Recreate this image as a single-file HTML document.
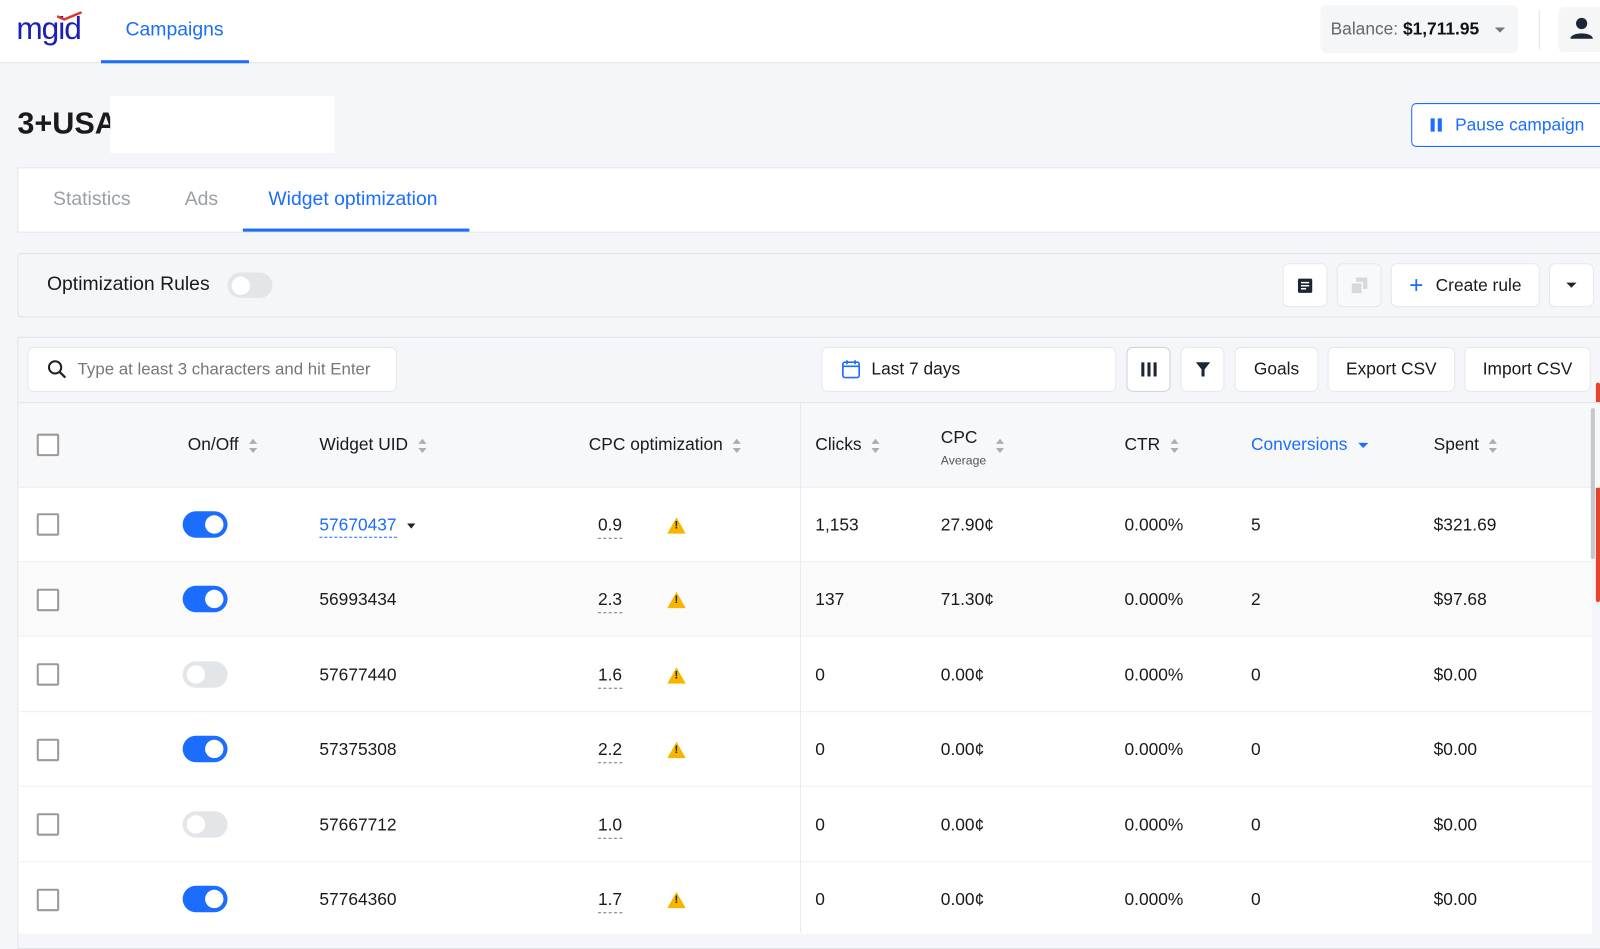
<!DOCTYPE html>
<html><head><meta charset="utf-8"><style>
*{box-sizing:border-box;margin:0;padding:0}
body{width:1600px;height:909px;overflow:hidden;background:#f5f6f9;font-family:"Liberation Sans",sans-serif;color:#1a1a1a;position:relative}
#w{position:absolute;left:0;top:0;width:1568px;height:891px;transform:scale(1.0204);transform-origin:0 0}
.a{position:absolute}
.t{font-size:17px;white-space:nowrap}
.btn{position:absolute;background:#fff;border-radius:5px;box-shadow:0 0 0 1px #e6e8ec;display:flex;align-items:center;justify-content:center;font-size:17px}
.cb{position:absolute;left:36px;width:22px;height:22px;border:2px solid #9a9a9a;border-radius:2px;background:#fff}
.tg{position:absolute;left:179px;width:44px;height:26px;border-radius:13px}
.tg.on{background:#1a6dff}.tg.off{background:#e3e6e9}
.tg::after{content:"";position:absolute;top:4px;width:18px;height:18px;border-radius:50%;background:#fff}
.tg.on::after{right:4px}.tg.off::after{left:4px}
.sort{display:inline-block;vertical-align:middle;margin-left:10px;width:8px;height:14px;position:relative}
.sort::before,.sort::after{content:"";position:absolute;left:0;border-left:4px solid transparent;border-right:4px solid transparent}
.sort::before{top:0;border-bottom:5px solid #a6afb8}.sort::after{bottom:0;border-top:5px solid #a6afb8}
.dash{border-bottom:1px dashed #777;padding-bottom:3px}
.warn{position:absolute;left:654px;width:0;height:0;border-left:9px solid transparent;border-right:9px solid transparent;border-bottom:16px solid #f7b500}
.warn::after{content:"!";position:absolute;left:-2px;top:2px;font-size:11px;font-weight:bold;color:#222}
</style></head><body><div id="w">
<div class="a" style="left:0;top:0;width:1568px;height:62px;background:#fff;border-bottom:1px solid #dfe2e6"></div>
<div class="a" style="left:16px;top:10px;font-size:31px;color:#1a1fb5;letter-spacing:-1px">mgid</div>
<svg class="a" style="left:54px;top:11px" width="28" height="10"><path d="M2 5 L9 8 L26 1" stroke="#e5322d" stroke-width="2.5" fill="none"/></svg>
<div class="a t" style="left:123px;top:19px;font-size:19px;color:#1a6dff">Campaigns</div>
<div class="a" style="left:99px;top:59px;width:145px;height:3px;background:#1a6dff"></div>
<div class="a" style="left:1294px;top:5px;width:194px;height:47px;background:#f5f6f8;border-radius:6px"></div>
<div class="a t" style="left:1304px;top:19px;color:#666">Balance: <b style="color:#111">$1,711.95</b></div>
<div class="a" style="left:1465px;top:27px;border-left:5px solid transparent;border-right:5px solid transparent;border-top:5px solid #777"></div>
<div class="a" style="left:1508px;top:10px;width:1px;height:38px;background:#dfe2e6"></div>
<div class="a" style="left:1527px;top:7px;width:73px;height:44px;background:#f5f6f8;border-radius:6px"></div>
<svg class="a" style="left:1538px;top:17px" width="24" height="22"><circle cx="12" cy="6" r="5.5" fill="#1d2733"/><path d="M1 21 C1 14 23 14 23 21 Z" fill="#1d2733"/></svg>
<div class="a" style="left:17px;top:105px;font-size:30px;font-weight:bold">3+USA·</div>
<div class="a" style="left:108px;top:94px;width:220px;height:56px;background:#fff"></div>
<div class="a" style="left:1383px;top:101px;width:230px;height:43px;border:1px solid #1a6dff;border-radius:5px;background:#fff"></div>
<div class="a" style="left:1402px;top:116px;width:4px;height:13px;background:#1a6dff"></div>
<div class="a" style="left:1409px;top:116px;width:4px;height:13px;background:#1a6dff"></div>
<div class="a t" style="left:1426px;top:113px;color:#1a6dff;font-size:17px">Pause campaign</div>
<div class="a" style="left:17px;top:164px;width:1600px;height:64px;background:#fff;border:1px solid #e3e6ea"></div>
<div class="a t" style="left:52px;top:185px;font-size:19px;color:#9aa0a6">Statistics</div>
<div class="a t" style="left:181px;top:185px;font-size:19px;color:#9aa0a6">Ads</div>
<div class="a t" style="left:263px;top:185px;font-size:19px;color:#1a6dff">Widget optimization</div>
<div class="a" style="left:238px;top:224px;width:222px;height:3px;background:#1a6dff"></div>
<div class="a" style="left:17px;top:248px;width:1600px;height:63px;border:1px solid #e0e3e8;border-radius:3px"></div>
<div class="a t" style="left:46px;top:268px;font-size:19px">Optimization Rules</div>
<div class="tg off" style="left:223px;top:267px;width:44px;height:25px"></div>
<div class="btn" style="left:1258px;top:259px;width:42px;height:41px"><svg width="16" height="16"><rect x="1" y="1" width="14" height="14" rx="1.5" fill="#1d2733"/><path d="M4 5h8M4 8h8M4 11h5" stroke="#fff" stroke-width="1.5"/></svg></div>
<div class="btn" style="left:1311px;top:259px;width:42px;height:41px;background:#f8f9fa"><svg width="18" height="18"><rect x="6" y="1" width="11" height="11" fill="#d6d8db"/><rect x="1" y="6" width="11" height="11" fill="#d6d8db" stroke="#f8f9fa" stroke-width="1.5"/></svg></div>
<div class="btn" style="left:1364px;top:259px;width:144px;height:41px;font-size:17px"><span style="color:#1a6dff;font-size:24px;margin-right:12px;line-height:1">+</span>Create rule</div>
<div class="btn" style="left:1519px;top:259px;width:42px;height:41px"><div style="border-left:5px solid transparent;border-right:5px solid transparent;border-top:5px solid #222"></div></div>
<div class="a" style="left:17px;top:330px;width:1600px;height:600px;border:1px solid #e0e3e8"></div>
<div class="btn" style="left:28px;top:341px;width:360px;height:42px;justify-content:flex-start;padding-left:18px;color:#777;font-size:16.5px"><svg width="20" height="20" style="margin-right:10px"><circle cx="8" cy="8" r="6" stroke="#222" stroke-width="2" fill="none"/><path d="M12.5 12.5 L18 18" stroke="#222" stroke-width="2.2"/></svg>Type at least 3 characters and hit Enter</div>
<div class="btn" style="left:806px;top:341px;width:287px;height:42px;justify-content:flex-start;padding-left:18px"><svg width="20" height="20" style="margin-right:10px"><rect x="2" y="3" width="16" height="15" rx="2" stroke="#1a6dff" stroke-width="1.6" fill="none"/><path d="M2 7h16M6 1v4M14 1v4" stroke="#1a6dff" stroke-width="1.6"/></svg>Last 7 days</div>
<div class="btn" style="left:1105px;top:341px;width:41px;height:42px;box-shadow:0 0 0 1px #d0d3d8"><svg width="16" height="14"><path d="M2 0v14M8 0v14M14 0v14" stroke="#1d2733" stroke-width="3"/></svg></div>
<div class="btn" style="left:1158px;top:341px;width:41px;height:42px"><svg width="16" height="16"><path d="M1 1h14L9.5 8v7h-3V8z" fill="#1d2733"/></svg></div>
<div class="btn" style="left:1211px;top:341px;width:80px;height:42px">Goals</div>
<div class="btn" style="left:1302px;top:341px;width:123px;height:42px">Export CSV</div>
<div class="btn" style="left:1436px;top:341px;width:122px;height:42px">Import CSV</div>
<div class="a" style="left:1564px;top:375px;width:4px;height:215px;background:#e5412b;border-radius:2px"></div>
<div class="a" style="left:18px;top:394px;width:1550px;height:84px;background:#f7f8fa;border-top:1px solid #e3e6ea;border-bottom:1px solid #e8eaee"></div>
<div class="cb" style="top:425px"></div>
<div class="a t" style="left:184px;top:426px">On/Off<span class="sort"></span></div>
<div class="a t" style="left:313px;top:426px">Widget UID<span class="sort"></span></div>
<div class="a t" style="left:577px;top:426px">CPC optimization<span class="sort"></span></div>
<div class="a t" style="left:799px;top:426px">Clicks<span class="sort"></span></div>
<div class="a t" style="left:922px;top:419px">CPC</div><div class="a" style="left:922px;top:444px;font-size:12px;color:#555">Average</div>
<div class="a" style="left:976px;top:428px"><span class="sort" style="margin:0"></span></div>
<div class="a t" style="left:1102px;top:426px">CTR<span class="sort"></span></div>
<div class="a t" style="left:1226px;top:426px;color:#1a6dff">Conversions<span style="display:inline-block;vertical-align:middle;margin-left:10px;border-left:5px solid transparent;border-right:5px solid transparent;border-top:5px solid #1a6dff"></span></div>
<div class="a t" style="left:1405px;top:426px">Spent<span class="sort"></span></div>
<div class="a" style="left:18px;top:478px;width:1542px;height:73px;background:#fff;border-bottom:1px solid #eceef1"></div>
<div class="a" style="left:18px;top:551px;width:1542px;height:73px;background:#fafafa;border-bottom:1px solid #eceef1"></div>
<div class="a" style="left:18px;top:624px;width:1542px;height:74px;background:#fff;border-bottom:1px solid #eceef1"></div>
<div class="a" style="left:18px;top:698px;width:1542px;height:73px;background:#fff;border-bottom:1px solid #eceef1"></div>
<div class="a" style="left:18px;top:771px;width:1542px;height:74px;background:#fff;border-bottom:1px solid #eceef1"></div>
<div class="a" style="left:18px;top:845px;width:1542px;height:70px;background:#fff"></div>
<div class="a" style="left:784px;top:394px;width:1px;height:520px;background:#e8eaee"></div>
<div class="a" style="left:1559px;top:400px;width:4px;height:148px;background:#c4c7cb;border-radius:2px"></div>

<div class="cb" style="top:503px"></div><div class="tg on" style="top:501px"></div>
<div class="a t" style="left:313px;top:505px;color:#1a6dff"><span style="border-bottom:1px dashed #1a6dff;padding-bottom:2px">57670437</span><span style="display:inline-block;vertical-align:middle;margin-left:10px;border-left:4px solid transparent;border-right:4px solid transparent;border-top:5px solid #222"></span></div>
<div class="a t" style="left:586px;top:505px"><span class="dash">0.9</span></div><div class="warn" style="top:507px"></div>
<div class="a t" style="left:799px;top:505px">1,153</div><div class="a t" style="left:922px;top:505px">27.90¢</div><div class="a t" style="left:1102px;top:505px">0.000%</div><div class="a t" style="left:1226px;top:505px">5</div><div class="a t" style="left:1405px;top:505px">$321.69</div>

<div class="cb" style="top:577px"></div><div class="tg on" style="top:574px"></div>
<div class="a t" style="left:313px;top:578px">56993434</div>
<div class="a t" style="left:586px;top:578px"><span class="dash">2.3</span></div><div class="warn" style="top:580px"></div>
<div class="a t" style="left:799px;top:578px">137</div><div class="a t" style="left:922px;top:578px">71.30¢</div><div class="a t" style="left:1102px;top:578px">0.000%</div><div class="a t" style="left:1226px;top:578px">2</div><div class="a t" style="left:1405px;top:578px">$97.68</div>

<div class="cb" style="top:650px"></div><div class="tg off" style="top:648px"></div>
<div class="a t" style="left:313px;top:652px">57677440</div>
<div class="a t" style="left:586px;top:652px"><span class="dash">1.6</span></div><div class="warn" style="top:654px"></div>
<div class="a t" style="left:799px;top:652px">0</div><div class="a t" style="left:922px;top:652px">0.00¢</div><div class="a t" style="left:1102px;top:652px">0.000%</div><div class="a t" style="left:1226px;top:652px">0</div><div class="a t" style="left:1405px;top:652px">$0.00</div>

<div class="cb" style="top:724px"></div><div class="tg on" style="top:721px"></div>
<div class="a t" style="left:313px;top:725px">57375308</div>
<div class="a t" style="left:586px;top:725px"><span class="dash">2.2</span></div><div class="warn" style="top:727px"></div>
<div class="a t" style="left:799px;top:725px">0</div><div class="a t" style="left:922px;top:725px">0.00¢</div><div class="a t" style="left:1102px;top:725px">0.000%</div><div class="a t" style="left:1226px;top:725px">0</div><div class="a t" style="left:1405px;top:725px">$0.00</div>

<div class="cb" style="top:797px"></div><div class="tg off" style="top:795px"></div>
<div class="a t" style="left:313px;top:799px">57667712</div>
<div class="a t" style="left:586px;top:799px"><span class="dash">1.0</span></div>
<div class="a t" style="left:799px;top:799px">0</div><div class="a t" style="left:922px;top:799px">0.00¢</div><div class="a t" style="left:1102px;top:799px">0.000%</div><div class="a t" style="left:1226px;top:799px">0</div><div class="a t" style="left:1405px;top:799px">$0.00</div>

<div class="cb" style="top:871px"></div><div class="tg on" style="top:868px"></div>
<div class="a t" style="left:313px;top:872px">57764360</div>
<div class="a t" style="left:586px;top:872px"><span class="dash">1.7</span></div><div class="warn" style="top:874px"></div>
<div class="a t" style="left:799px;top:872px">0</div><div class="a t" style="left:922px;top:872px">0.00¢</div><div class="a t" style="left:1102px;top:872px">0.000%</div><div class="a t" style="left:1226px;top:872px">0</div><div class="a t" style="left:1405px;top:872px">$0.00</div>
</div></body></html>
